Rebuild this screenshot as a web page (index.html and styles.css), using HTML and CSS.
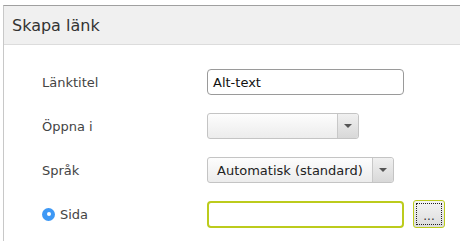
FILE: index.html
```html
<!DOCTYPE html>
<html lang="sv">
<head>
  <meta charset="UTF-8" />
  <title>Skapa länk</title>
  <link rel="stylesheet" href="styles.css">
</head>
<body>
  <div class="dialog">
    <div class="dialog-header">
      <h1>Skapa länk</h1>
    </div>

    <div class="dialog-body">
      <div class="rad">
        <label class="etikett">Länktitel</label>
        <div class="falt">Alt-text</div>
      </div>

      <div class="rad">
        <label class="etikett">Öppna i</label>
        <div class="lista lista-smal">
          <span class="lista-text"></span>
          <span class="pil"><span class="triangel"></span></span>
        </div>
      </div>

      <div class="rad">
        <label class="etikett">Språk</label>
        <div class="lista">
          <span class="lista-text">Automatisk (standard)</span>
          <span class="pil"><span class="triangel"></span></span>
        </div>
      </div>

      <div class="rad">
        <label class="etikett"><span class="radio"></span>Sida</label>
        <div class="falt falt-aktiv"></div>
        <button class="bladdra"><span>...</span></button>
      </div>
    </div>
  </div>
</body>
</html>
```

FILE: styles.css
```css
body {
  font-family: "DejaVu Sans", Verdana, sans-serif;
  background: #ffffff;
  margin: 0;
  padding: 5px 0 0 3px;
  overflow: hidden;
}

.dialog {
  box-sizing: border-box;
  border-top: 1px solid #a0a0a0;
  border-left: 1px solid #c8c8c8;
  height: 236px;
}

.dialog-header {
  background: #f0f0f0;
  border-bottom: 1px solid #dcdcdc;
  height: 38px;
  display: flex;
  align-items: center;
}

.dialog-header h1 {
  font-size: 16px;
  font-weight: normal;
  color: #333;
  margin: 0 0 0 8px;
}

.dialog-body {
  padding: 24px 0 0 38px;
  display: flex;
  flex-direction: column;
  gap: 18px;
}

.rad {
  display: flex;
  align-items: center;
  height: 26px;
}

.etikett {
  width: 165px;
  font-size: 13px;
  color: #444;
  display: flex;
  align-items: center;
}

.falt {
  box-sizing: border-box;
  width: 197px;
  height: 26px;
  border: 1px solid #9a9a9a;
  border-radius: 4px;
  font-size: 13px;
  color: #111;
  padding: 0 5px;
  display: flex;
  align-items: center;
}

.falt-aktiv {
  border: 2px solid #bccb1c;
  height: 27px;
}

.lista {
  box-sizing: border-box;
  width: 187px;
  height: 26px;
  border: 1px solid #c4c4c4;
  border-radius: 3px;
  background: linear-gradient(#fdfdfd, #ececec);
  display: flex;
  font-size: 13px;
  color: #222;
}

.lista-smal {
  width: 152px;
}

.lista-text {
  flex: 1;
  display: flex;
  align-items: center;
  padding-left: 9px;
}

.pil {
  width: 20px;
  border-left: 1px solid #c8c8c8;
  background: linear-gradient(#f0f0f0, #d8d8d8);
  display: flex;
  align-items: center;
  justify-content: center;
  border-radius: 0 3px 3px 0;
}

.triangel {
  width: 0;
  height: 0;
  border-left: 4px solid transparent;
  border-right: 4px solid transparent;
  border-top: 4px solid #555;
}

.radio {
  width: 13px;
  height: 13px;
  border-radius: 50%;
  background: #3d98f5;
  margin: 0 5px 0 0;
  display: flex;
  align-items: center;
  justify-content: center;
}

.radio::after {
  content: "";
  width: 4px;
  height: 4px;
  border-radius: 50%;
  background: #fff;
}

.bladdra {
  box-sizing: border-box;
  margin-left: 9px;
  width: 32px;
  height: 28px;
  border: 1px solid #bccb1c;
  border-radius: 3px;
  background: linear-gradient(#f4f4f4, #dcdcdc);
  padding: 2px;
  font-family: inherit;
  font-size: 12px;
  color: #333;
}

.bladdra span {
  display: flex;
  align-items: flex-end;
  justify-content: center;
  height: 100%;
  border: 1px dotted #222;
  box-sizing: border-box;
  padding-bottom: 2px;
  line-height: 1;
}
```
